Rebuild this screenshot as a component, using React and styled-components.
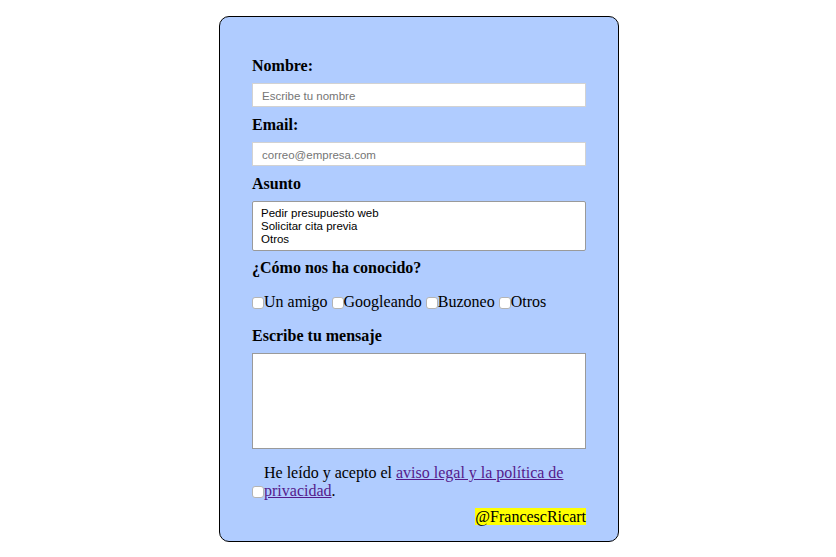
import React from 'react';
import styled, { createGlobalStyle } from 'styled-components';

const GlobalStyle = createGlobalStyle`
  body {
    margin: 8px;
    background: #fff;
    font-family: "Liberation Serif", "Times New Roman", serif;
    font-size: 16px;
    color: #000;
  }
`;

const Card = styled.form`
  box-sizing: border-box;
  width: 400px;
  margin: 8px 0 0 calc(50% - 199px);
  padding: 40px 32px 15px;
  border: 1px solid #000;
  border-radius: 10px;
  background: #b0ccff;
  line-height: 18px;
`;

const Label = styled.label`
  display: block;
  font-weight: bold;
  margin-bottom: ${p => p.$gap ?? 8}px;
`;

const TextInput = styled.input`
  display: block;
  box-sizing: border-box;
  width: 100%;
  height: 24px;
  margin: 0 0 9px;
  padding: 1px 9px 0;
  border: 1px solid #d2d2d2;
  background: #fff;
  font-family: "Liberation Sans", Arial, sans-serif;
  font-size: 11.5px;
  outline: none;
  &::placeholder {
    color: #757575;
  }
`;

const Select = styled.select`
  display: block;
  box-sizing: border-box;
  width: 100%;
  height: 50px;
  margin: 0 0 8px;
  padding: 5px 8px 0;
  border: 1px solid #9a9a9a;
  background: #fff;
  font-family: "Liberation Sans", Arial, sans-serif;
  font-size: 11.5px;
  overflow: hidden;
  outline: none;
  option {
    display: block;
    box-sizing: border-box;
    height: 13px;
    min-height: 0;
    padding: 0;
    line-height: 13px;
    color: #000;
  }
`;

const CheckRow = styled.div`
  margin: 16px 0;
`;

const Check = styled.input.attrs({ type: 'checkbox' })`
  appearance: none;
  box-sizing: border-box;
  width: 12px;
  height: 12px;
  margin: 0;
  border: 1px solid #b4b4b4;
  border-radius: 3px;
  background: #fff;
  vertical-align: -2px;
`;

const TextArea = styled.textarea`
  display: block;
  box-sizing: border-box;
  width: 100%;
  height: 96px;
  margin: 0 0 15px;
  border: 1px solid #9a9a9a;
  background: #fff;
  resize: none;
  outline: none;
`;

const Legal = styled.div`
  line-height: 18px;
`;

const LegalText = styled.label`
  display: inline-block;
  width: calc(100% - 12px);
  vertical-align: baseline;

  a {
    color: #551a8b;
    text-decoration: underline;
  }
`;

const Credit = styled.div`
  margin-top: 8px;
  text-align: right;

  span {
    background: #ffff00;
  }
`;

const sources = ['Un amigo', 'Googleando', 'Buzoneo', 'Otros'];

const App = () => {
    return (
        <>
            <GlobalStyle />
            <Card onSubmit={e => e.preventDefault()}>
                <Label htmlFor="nombre">Nombre:</Label>
                <TextInput id="nombre" type="text" placeholder="Escribe tu nombre" />

                <Label htmlFor="email">Email:</Label>
                <TextInput id="email" type="email" placeholder="correo@empresa.com" />

                <Label htmlFor="asunto">Asunto</Label>
                <Select id="asunto" multiple size={3}>
                    <option>Pedir presupuesto web</option>
                    <option>Solicitar cita previa</option>
                    <option>Otros</option>
                </Select>

                <Label as="div" $gap={0}>¿Cómo nos ha conocido?</Label>
                <CheckRow>
                    {sources.map((s, i) => (
                        <React.Fragment key={s}>
                            {i > 0 && ' '}
                            <Check id={`src-${i}`} />
                            <label htmlFor={`src-${i}`}>{s}</label>
                        </React.Fragment>
                    ))}
                </CheckRow>

                <Label htmlFor="mensaje">Escribe tu mensaje</Label>
                <TextArea id="mensaje" />

                <Legal>
                    <Check id="legal" />
                    <LegalText htmlFor="legal">
                        He leído y acepto el <a href="#aviso">aviso legal y la política de privacidad</a>.
                    </LegalText>
                </Legal>

                <Credit><span>@FrancescRicart</span></Credit>
            </Card>
        </>
    );
};

export default App;
